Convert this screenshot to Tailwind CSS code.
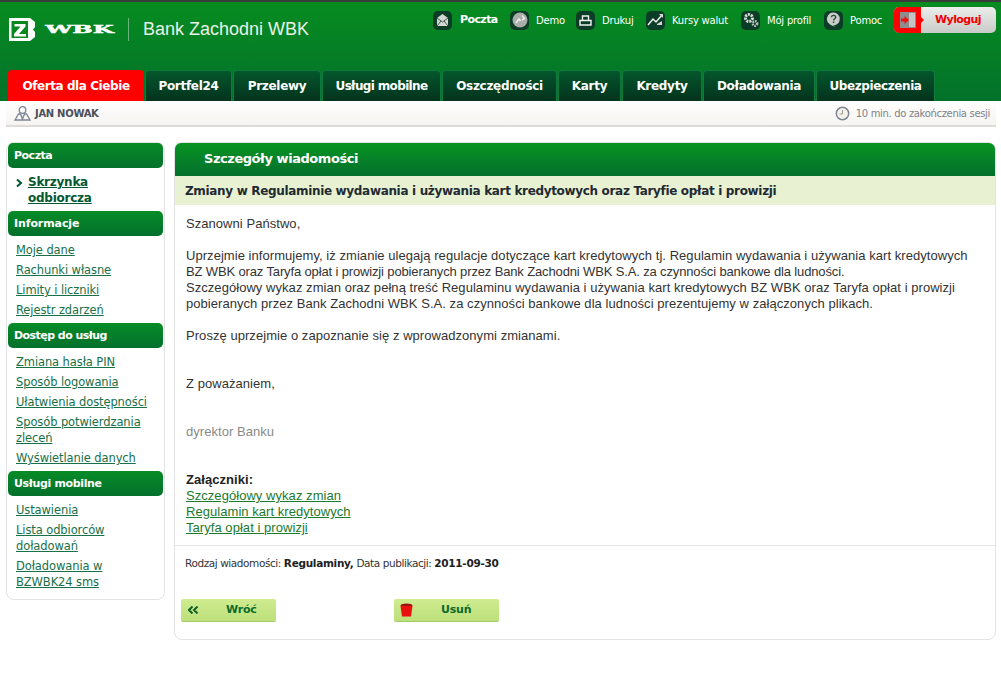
<!DOCTYPE html>
<html lang="pl">
  <head>
    <meta charset="UTF-8" />
    <title>Bank Zachodni WBK</title>
    <script src="https://cdn.jsdelivr.net/npm/@tailwindcss/browser@4"></script>
  </head>
  <body class="bg-white w-[1001px] h-[678px] overflow-hidden font-['Liberation_Sans',sans-serif] text-[13px] text-[#333]">
    <!-- top green header -->
    <header class="h-[101px] border-t-2 border-[#3a3a3a] bg-gradient-to-b from-[#078c1f] to-[#03712a] flex flex-col justify-between">
      <div class="flex justify-between">
        <div class="flex items-center pl-[9px] pt-[15px]">
          <svg width="26" height="23" viewBox="0 0 26 23">
            <path d="M0 0H21L26 4V9L24 11.500L26 14V19L21 23H0Z" fill="#fff" />
            <path d="M2.500 3H19V20H2.500Z" fill="#07881f" />
            <path d="M5.500 6H16.500V8.500L10 16H17V18.500H5V16L11.500 8.500H5.500Z" fill="#fff" />
          </svg>
          <span class="ml-[10px] w-[69px] h-[12px] flex items-center justify-center font-['DejaVu_Serif',serif] font-bold text-[11px] leading-none text-white scale-x-[2.2] [-webkit-text-stroke:0.4px_white]">WBK</span>
          <span class="ml-[14px] w-px h-[23px] bg-white/40"></span>
          <span class="ml-[14px] text-[18px] leading-[24px] text-[#e8f3e8]">Bank Zachodni WBK</span>
        </div>
        <div class="flex items-start pt-[5px] pr-[5px] font-['DejaVu_Sans',sans-serif] text-[10px] tracking-[-0.2px] text-white">
          <a class="flex items-center w-[77px] h-[26px]">
            <span class="w-[19px] h-[19px] rounded-[5px] bg-[#0b3d26] flex items-center justify-center">
              <svg width="13" height="14" viewBox="0 0 13 14"><path d="M1 5L6.500 1L12 5V13H1Z" fill="#d4d8d4" /><path d="M1 5L6.500 9L12 5M1 13L5 8M12 13L8 8" fill="none" stroke="#3d5a4c" /></svg>
            </span>
            <b class="ml-[8px] text-[11px] tracking-[-0.6px]">Poczta</b>
          </a>
          <a class="flex items-center w-[66px] h-[26px]">
            <span class="w-[19px] h-[19px] rounded-[5px] bg-[#0b3d26] flex items-center justify-center">
              <svg width="16" height="16" viewBox="0 0 16 16"><circle cx="8" cy="8" r="7.500" fill="#a9aea9" /><path d="M4 11L7 7L8.500 9M10 3.500L12.500 6.500L10 8" fill="none" stroke="#ececec" stroke-width="1.500" /></svg>
            </span>
            <span class="ml-[7px]">Demo</span>
          </a>
          <a class="flex items-center w-[70px] h-[26px]">
            <span class="w-[19px] h-[19px] rounded-[5px] bg-[#0b3d26] flex items-center justify-center">
              <svg width="13" height="11" viewBox="0 0 13 11"><path d="M3.500 5V1H9.500V5M1 5.500H12V10H1Z" fill="none" stroke="#f2f2f2" stroke-width="1.400" /></svg>
            </span>
            <span class="ml-[7px]">Drukuj</span>
          </a>
          <a class="flex items-center w-[95px] h-[26px]">
            <span class="w-[19px] h-[19px] rounded-[5px] bg-[#0b3d26] flex items-center justify-center">
              <svg width="17" height="14" viewBox="0 0 17 14"><path d="M1 12L6 6L9 9L15 2" fill="none" stroke="#f0f0f0" stroke-width="1.500" /><path d="M12 1H16V5Z M10 11L15 8V12H10Z" fill="#d8d8d8" /></svg>
            </span>
            <span class="ml-[7px]">Kursy walut</span>
          </a>
          <a class="flex items-center w-[83px] h-[26px]">
            <span class="w-[19px] h-[19px] rounded-[5px] bg-[#0b3d26] flex items-center justify-center">
              <svg width="16" height="16" viewBox="0 0 16 16"><circle cx="6" cy="6" r="3.500" fill="none" stroke="#dcdcdc" stroke-width="3" stroke-dasharray="2 1" /><circle cx="12" cy="11.500" r="2.200" fill="none" stroke="#bcbcbc" stroke-width="2.400" stroke-dasharray="1.500 .8" /></svg>
            </span>
            <span class="ml-[7px]">Mój profil</span>
          </a>
          <a class="flex items-center w-[70px] h-[26px]">
            <span class="w-[19px] h-[19px] rounded-[5px] bg-[#0b3d26] flex items-center justify-center">
              <svg width="15" height="16" viewBox="0 0 15 16"><path d="M7.500 .5A6.500 6.500 0 1 1 7 13.500L10 15.500L4 12.500A6.500 6.500 0 0 1 7.500 .5Z" fill="#c9cdc9" /><path d="M5.500 5.200C5.500 2.800 9.700 2.800 9.700 5.200C9.700 6.800 7.600 6.800 7.600 8.500M7.600 9.500V11" fill="none" stroke="#2c4a3c" stroke-width="1.400" /></svg>
            </span>
            <span class="ml-[7px]">Pomoc</span>
          </a>
          <a class="flex w-[102px] h-[26px] rounded-[5px] bg-gradient-to-b from-[#eceeec] to-[#c8cbc8]">
            <span class="relative w-[27px] rounded-l-[5px] bg-[#ff0000] flex items-center justify-center">
              <svg width="16" height="16" viewBox="0 0 16 16"><path d="M0 0H16V16H0Z" fill="#8d8d8d" /><path d="M9 1H15V15H9Z" fill="#c4c4c4" /><path d="M1 6.500H4.500V4L9 8L4.500 12V9.500H1Z" fill="#ee1111" /></svg>
              <span class="absolute right-[-3px] top-[10px] w-0 h-0 border-y-[3px] border-y-transparent border-l-[3px] border-l-[#ff0000]"></span>
            </span>
            <b class="flex-1 text-center pt-[6px] pr-[1px] text-[11px] leading-[14px] tracking-[-0.6px] text-[#f00000]">Wyloguj</b>
          </a>
        </div>
      </div>
      <!-- main tabs -->
      <nav class="flex gap-px pl-[8px] font-['DejaVu_Sans',sans-serif] font-bold text-[12px] tracking-[-0.3px] text-white">
        <a class="w-[136px] h-[31px] rounded-t-[4px] bg-[#ff0000] flex items-center justify-center tracking-[-0.42px]">Oferta dla Ciebie</a>
        <a class="w-[87px] h-[31px] rounded-t-[4px] border-t border-x border-[#0f7a3b] bg-gradient-to-b from-[#04572c] to-[#03331d] flex items-center justify-center">Portfel24</a>
        <a class="w-[88px] h-[31px] rounded-t-[4px] border-t border-x border-[#0f7a3b] bg-gradient-to-b from-[#04572c] to-[#03331d] flex items-center justify-center">Przelewy</a>
        <a class="w-[119px] h-[31px] rounded-t-[4px] border-t border-x border-[#0f7a3b] bg-gradient-to-b from-[#04572c] to-[#03331d] flex items-center justify-center tracking-[-0.65px]">Usługi mobilne</a>
        <a class="w-[115px] h-[31px] rounded-t-[4px] border-t border-x border-[#0f7a3b] bg-gradient-to-b from-[#04572c] to-[#03331d] flex items-center justify-center">Oszczędności</a>
        <a class="w-[63px] h-[31px] rounded-t-[4px] border-t border-x border-[#0f7a3b] bg-gradient-to-b from-[#04572c] to-[#03331d] flex items-center justify-center">Karty</a>
        <a class="w-[80px] h-[31px] rounded-t-[4px] border-t border-x border-[#0f7a3b] bg-gradient-to-b from-[#04572c] to-[#03331d] flex items-center justify-center">Kredyty</a>
        <a class="w-[112px] h-[31px] rounded-t-[4px] border-t border-x border-[#0f7a3b] bg-gradient-to-b from-[#04572c] to-[#03331d] flex items-center justify-center">Doładowania</a>
        <a class="w-[119px] h-[31px] rounded-t-[4px] border-t border-x border-[#0f7a3b] bg-gradient-to-b from-[#04572c] to-[#03331d] flex items-center justify-center tracking-[-0.4px]">Ubezpieczenia</a>
      </nav>
    </header>

    <!-- user bar -->
    <div class="ml-[6px] mr-[5px] h-[26px] border-b-2 border-[#dedcd8] bg-gradient-to-b from-white to-[#f6f4f0] flex items-center justify-between pl-[8px] pr-[6px]">
      <div class="flex items-center">
        <svg width="17" height="15" viewBox="0 0 17 15"><circle cx="8.500" cy="4" r="3.300" fill="none" stroke="#7d8494" stroke-width="1.300" /><path d="M1 14L4.500 8H6.500L8.500 13L10.500 8H12.500L16 14Z" fill="none" stroke="#7d8494" stroke-width="1.300" /></svg>
        <span class="ml-[4px] font-['DejaVu_Sans',sans-serif] font-bold text-[10px] tracking-[-0.3px] text-[#4a4f5a]">JAN NOWAK</span>
      </div>
      <div class="flex items-center font-['DejaVu_Sans',sans-serif] text-[10px] tracking-[-0.33px] text-[#7d8288]">
        <svg width="15" height="15" viewBox="0 0 15 15"><circle cx="7.500" cy="7.500" r="6.200" fill="#f4f2ea" stroke="#7d8494" stroke-width="1.500" /><path d="M7.500 4V8H4.500" fill="none" stroke="#9a9a8e" /></svg>
        <span class="ml-[6px]">10 min. do zakończenia sesji</span>
      </div>
    </div>

    <div class="flex items-start pl-[6px] pt-[15px]">
      <!-- left menu -->
      <aside class="w-[159px] h-[458px] shrink-0 rounded-[8px] border border-[#e3e3e3] px-px font-['DejaVu_Sans',sans-serif] text-[11.5px] leading-[16px] tracking-[-0.1px] text-[#187048]">
        <h3 class="h-[25px] pt-px rounded-[5px] bg-gradient-to-b from-[#078c26] to-[#04702c] pl-[6px] flex items-center font-bold text-[11px] tracking-[-0.5px] text-white">Poczta</h3>
        <ul class="pt-[6px] pb-[5px]">
          <li class="relative pl-[20px] font-bold text-[12px] tracking-[-0.25px] text-[#05572f] underline">
            <svg class="absolute left-[8px] top-[5px]" width="7" height="8" viewBox="0 0 7 8"><path d="M1 0.500L5 4L1 7.500" fill="none" stroke="#05572f" stroke-width="2" /></svg>
            Skrzynka<br />odbiorcza
          </li>
        </ul>
        <h3 class="h-[25px] pt-px rounded-[5px] bg-gradient-to-b from-[#078c26] to-[#04702c] pl-[6px] flex items-center font-bold text-[11px] text-white">Informacje</h3>
        <ul class="pt-[6px] pb-[5px] pl-[8px] flex flex-col gap-[4px] underline">
          <li>Moje dane</li>
          <li>Rachunki własne</li>
          <li>Limity i liczniki</li>
          <li>Rejestr zdarzeń</li>
        </ul>
        <h3 class="h-[25px] pt-px rounded-[5px] bg-gradient-to-b from-[#078c26] to-[#04702c] pl-[6px] flex items-center font-bold text-[11px] tracking-[-0.55px] text-white">Dostęp do usług</h3>
        <ul class="pt-[6px] pb-[5px] pl-[8px] flex flex-col gap-[4px] underline">
          <li>Zmiana hasła PIN</li>
          <li>Sposób logowania</li>
          <li>Ułatwienia dostępności</li>
          <li>Sposób potwierdzania<br />zleceń</li>
          <li>Wyświetlanie danych</li>
        </ul>
        <h3 class="h-[25px] pt-px rounded-[5px] bg-gradient-to-b from-[#078c26] to-[#04702c] pl-[6px] flex items-center font-bold text-[11px] tracking-[-0.35px] text-white">Usługi mobilne</h3>
        <ul class="pt-[6px] pl-[8px] flex flex-col gap-[4px] underline">
          <li>Ustawienia</li>
          <li>Lista odbiorców<br />doładowań</li>
          <li>Doładowania w<br />BZWBK24 sms</li>
        </ul>
      </aside>

      <!-- message -->
      <main class="ml-[9px] w-[822px] h-[498px] rounded-[8px] border border-[#e3e3e3]">
        <h1 class="h-[33px] pb-px rounded-t-[6px] bg-gradient-to-b from-[#079421] to-[#04702c] pl-[29px] flex items-center font-['DejaVu_Sans',sans-serif] font-bold text-[13px] tracking-[-0.45px] text-white">Szczegóły wiadomości</h1>
        <h2 class="h-[29px] bg-[#e8f2d2] pl-[10px] flex items-center font-['DejaVu_Sans',sans-serif] font-bold text-[12px] tracking-[-0.33px] text-[#1f2a33]">Zmiany w Regulaminie wydawania i używania kart kredytowych oraz Taryfie opłat i prowizji</h2>
        <div class="h-[341px] border-b border-[#e5e5e5] pl-[11px] pt-[11px] leading-[16px] tracking-[0.05px]">
          <p>Szanowni Państwo,</p>
          <p class="mt-[16px]">
            Uprzejmie informujemy, iż zmianie ulegają regulacje dotyczące kart kredytowych tj. Regulamin wydawania i używania kart kredytowych<br />
            <span class="tracking-[-0.14px]">BZ WBK oraz Taryfa opłat i prowizji pobieranych przez Bank Zachodni WBK S.A. za czynności bankowe dla ludności.</span><br />
            Szczegółowy wykaz zmian oraz pełną treść Regulaminu wydawania i używania kart kredytowych BZ WBK oraz Taryfa opłat i prowizji<br />
            pobieranych przez Bank Zachodni WBK S.A. za czynności bankowe dla ludności prezentujemy w załączonych plikach.
          </p>
          <p class="mt-[16px]">Proszę uprzejmie o zapoznanie się z wprowadzonymi zmianami.</p>
          <p class="mt-[32px]">Z poważaniem,</p>
          <p class="mt-[32px] text-[#8a8a8a]">dyrektor Banku</p>
          <p class="mt-[32px] font-bold text-[#222]">Załączniki:</p>
          <ul class="text-[#1c7a2e] underline">
            <li>Szczegółowy wykaz zmian</li>
            <li>Regulamin kart kredytowych</li>
            <li>Taryfa opłat i prowizji</li>
          </ul>
        </div>
        <p class="pl-[10px] pt-[9px] font-['DejaVu_Sans',sans-serif] text-[10.5px] leading-[16px] tracking-[-0.42px] text-[#333]">
          Rodzaj wiadomości: <b class="text-[#222] tracking-[-0.3px]">Regulaminy,</b> Data publikacji: <b class="text-[#222] tracking-[-0.3px]">2011-09-30</b>
        </p>
        <div class="flex pl-[6px] pt-[28px] font-['DejaVu_Sans',sans-serif] font-bold text-[11px] tracking-[-0.2px] text-[#0d6b2c]">
          <a class="w-[95px] h-[23px] rounded-[2px] bg-gradient-to-b from-[#cfec90] to-[#bde07a] border-b border-[#a6c96a] flex items-center pl-[7px]">
            <svg width="11" height="8" viewBox="0 0 11 8"><path d="M4.500 .5L1 4L4.500 7.500M9.500 .5L6 4L9.500 7.500" fill="none" stroke="#0d5f2a" stroke-width="2" /></svg>
            <span class="ml-[27px]">Wróć</span>
          </a>
          <a class="ml-[118px] w-[105px] h-[23px] rounded-[2px] bg-gradient-to-b from-[#cfec90] to-[#bde07a] border-b border-[#a6c96a] flex items-center pl-[6px]">
            <svg width="13" height="14" viewBox="0 0 13 14"><ellipse cx="6.500" cy="2.500" rx="6" ry="2" fill="#9c1313" /><path d="M.5 3H12.500L11 13.500H2Z" fill="#e8120f" /></svg>
            <span class="ml-[28px]">Usuń</span>
          </a>
        </div>
      </main>
    </div>
  </body>
</html>
